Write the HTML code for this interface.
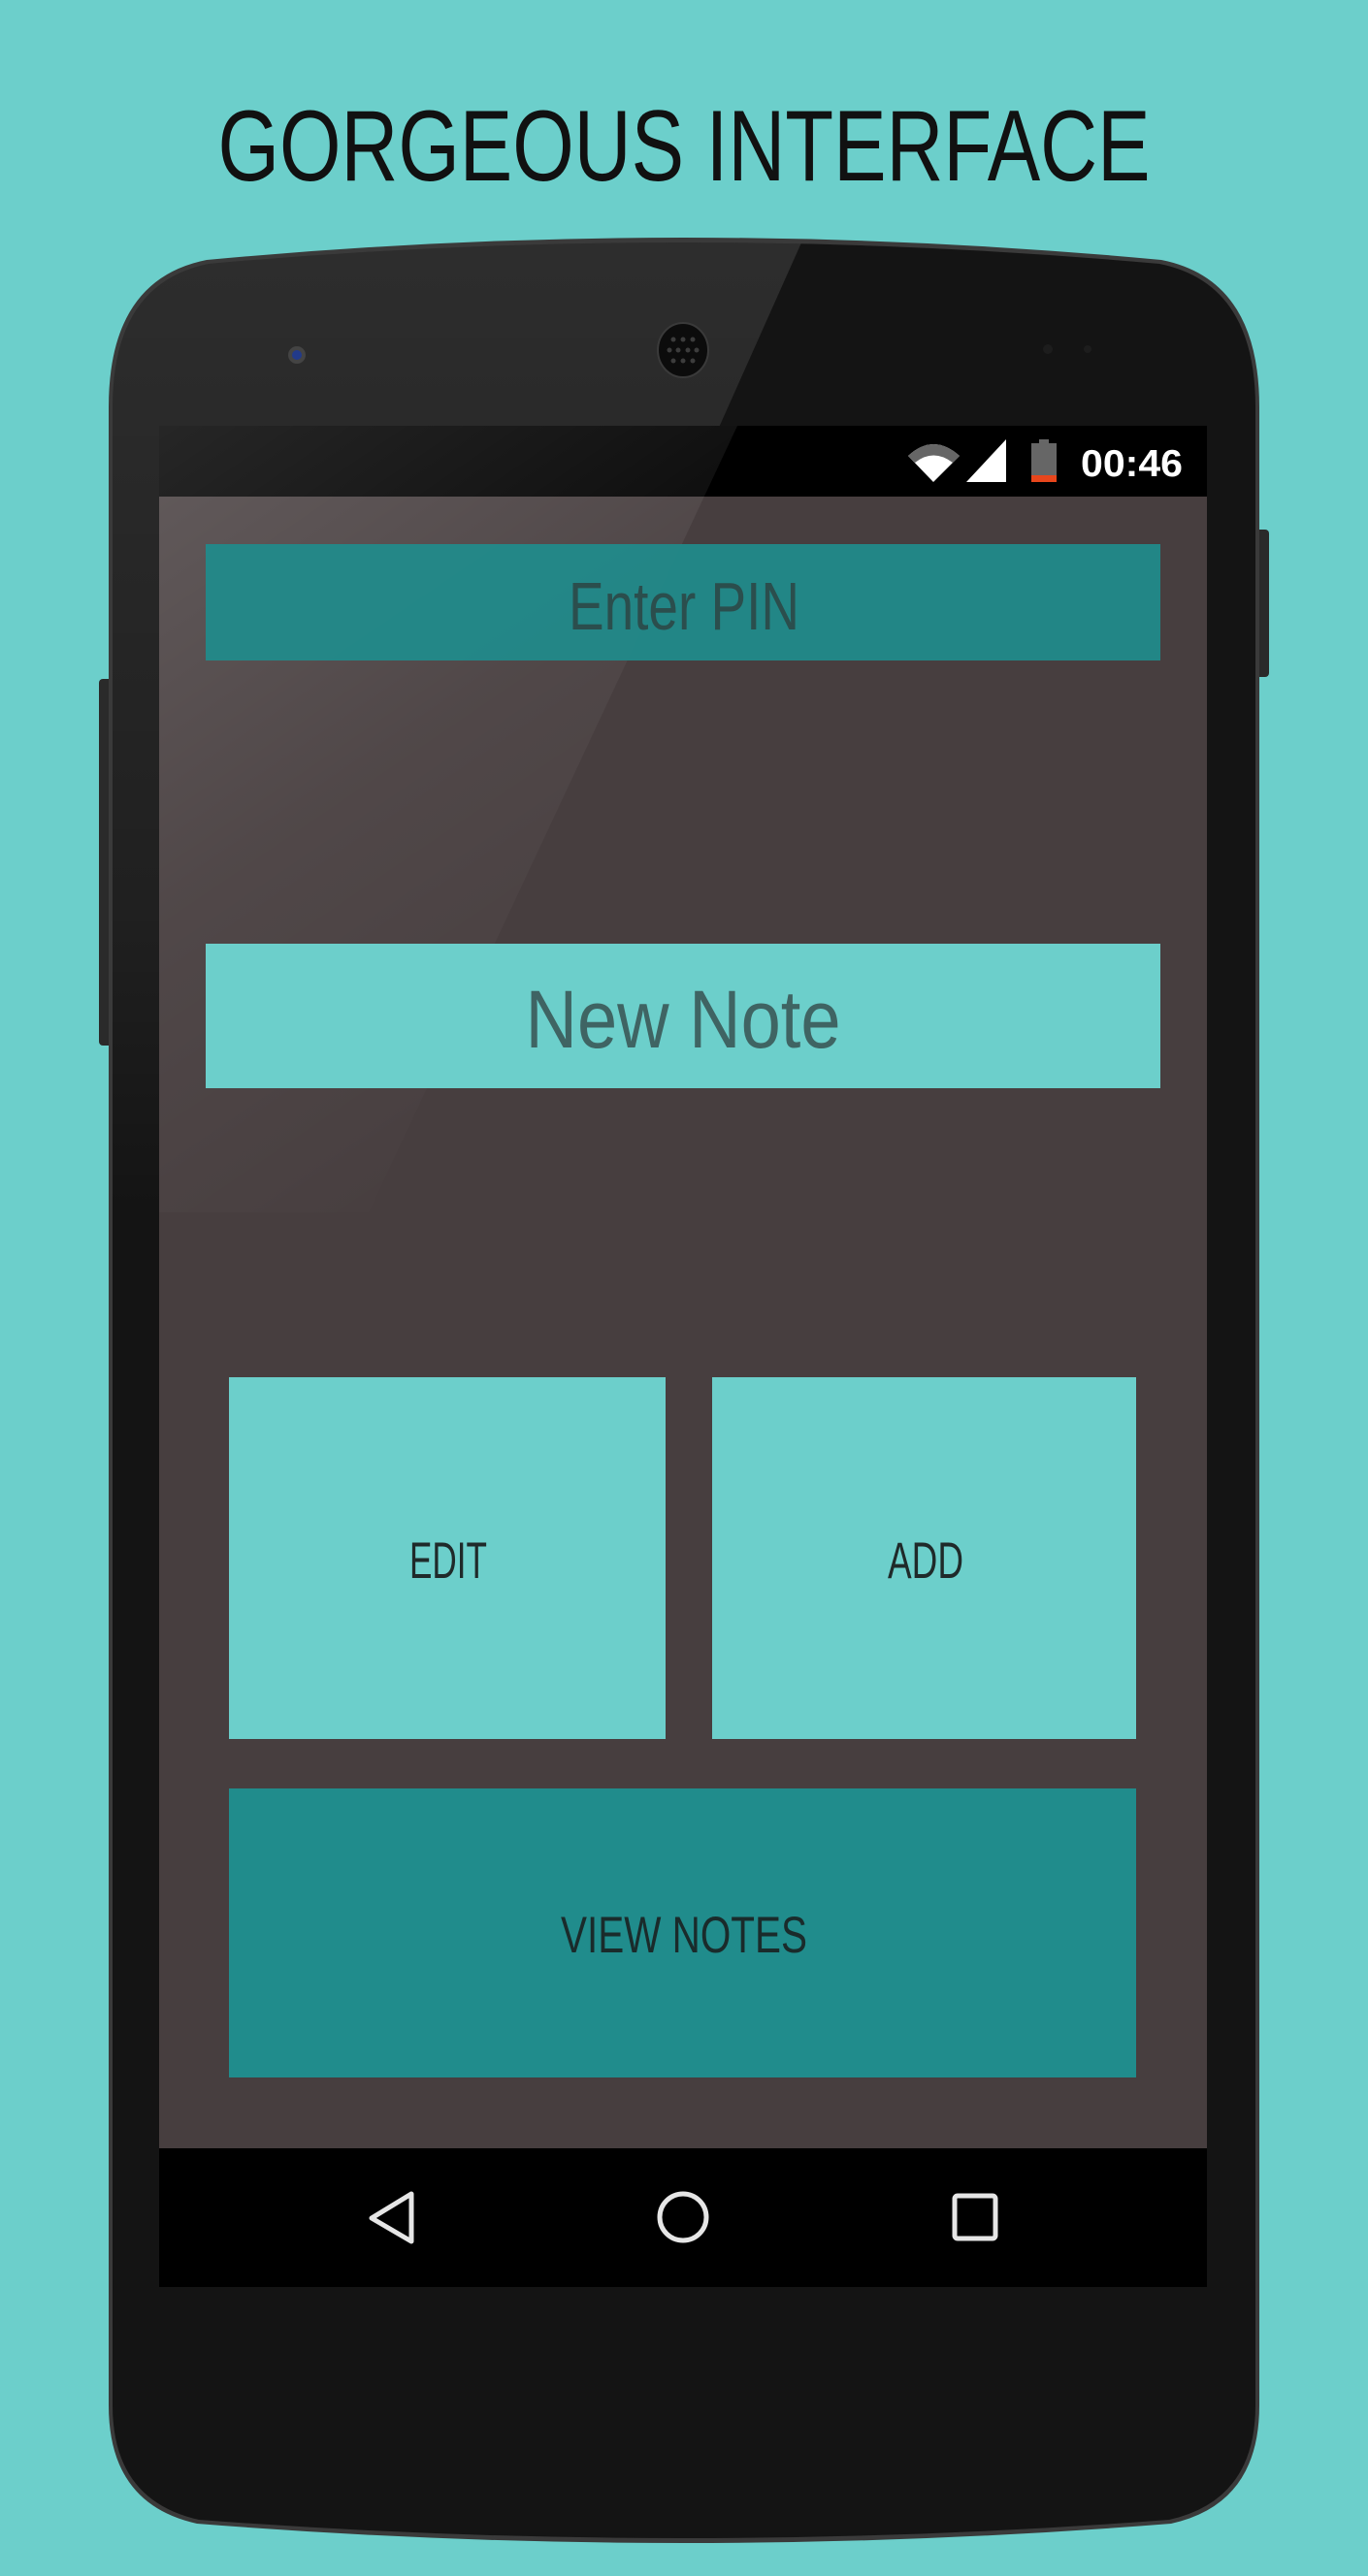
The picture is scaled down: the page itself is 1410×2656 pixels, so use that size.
<!DOCTYPE html>
<html><head><meta charset="utf-8"><style>
html,body{margin:0;padding:0;background:#6ccfcb;}
svg{display:block}
</style></head><body>
<svg width="1410" height="2656" viewBox="0 0 1410 2656" xmlns="http://www.w3.org/2000/svg">
<defs>
<linearGradient id="gl" x1="0" y1="0" x2="0.5" y2="1">
<stop offset="0" stop-color="#fff" stop-opacity="0.15"/>
<stop offset="0.5" stop-color="#fff" stop-opacity="0.05"/>
<stop offset="1" stop-color="#fff" stop-opacity="0"/>
</linearGradient>
<linearGradient id="bz" x1="0" y1="0" x2="0" y2="1">
<stop offset="0" stop-color="#fff" stop-opacity="0.11"/>
<stop offset="0.7" stop-color="#fff" stop-opacity="0.05"/>
<stop offset="1" stop-color="#fff" stop-opacity="0"/>
</linearGradient>
<clipPath id="ph"><path d="M116,420 Q116,292 215,272 Q705,228 1195,272 Q1294,292 1294,420 L1294,2480 Q1294,2578 1205,2598 Q705,2636 205,2598 Q116,2578 116,2480 Z"/></clipPath>
</defs>
<rect width="1410" height="2656" fill="#6ccfcb"/>
<text x="705" y="186" text-anchor="middle" font-family="Liberation Sans, sans-serif" font-size="104" fill="#111" textLength="961" lengthAdjust="spacingAndGlyphs">GORGEOUS INTERFACE</text>
<rect x="1292" y="546" width="16" height="152" rx="4" fill="#2a2a2a"/>
<rect x="102" y="700" width="16" height="378" rx="4" fill="#2a2a2a"/>
<path d="M112,420 Q112,288 213,268 Q705,222 1197,268 Q1298,288 1298,420 L1298,2480 Q1298,2582 1207,2602 Q705,2642 203,2602 Q112,2582 112,2480 Z" fill="#3a3a3a"/>
<path d="M116,420 Q116,292 215,272 Q705,228 1195,272 Q1294,292 1294,420 L1294,2480 Q1294,2578 1205,2598 Q705,2636 205,2598 Q116,2578 116,2480 Z" fill="#141414"/>
<g clip-path="url(#ph)">
<polygon points="100,230 835,230 380,1250 100,1250" fill="url(#bz)"/>
</g>
<circle cx="306" cy="366" r="9" fill="#444"/><circle cx="306" cy="366" r="5" fill="#223a8a"/>
<ellipse cx="704" cy="361" rx="26" ry="28" fill="#0c0c0c" stroke="#3a3a3a" stroke-width="2"/>
<g fill="#3c3c3c">
<circle cx="694" cy="350" r="2.5"/><circle cx="704" cy="350" r="2.5"/><circle cx="714" cy="350" r="2.5"/>
<circle cx="690" cy="361" r="2.5"/><circle cx="699" cy="361" r="2.5"/><circle cx="709" cy="361" r="2.5"/><circle cx="718" cy="361" r="2.5"/>
<circle cx="694" cy="372" r="2.5"/><circle cx="704" cy="372" r="2.5"/><circle cx="714" cy="372" r="2.5"/>
</g>
<circle cx="1080" cy="360" r="5" fill="#1d1d1d"/><circle cx="1121" cy="360" r="4" fill="#1d1d1d"/>
<rect x="164" y="439" width="1080" height="73" fill="#000"/>
<rect x="164" y="512" width="1080" height="1703" fill="#473e3f"/>
<rect x="164" y="2215" width="1080" height="143" fill="#000"/>
<polygon points="164,439 760,439 380,1250 164,1250" fill="url(#gl)"/>
<path d="M936,470 Q962,446 989,470 L962,497 Z" fill="#fff"/>
<path d="M936,470 Q962,446 989,470 L982,477 Q962,462 943,477 Z" fill="#666"/>
<polygon points="996,497 1037,453 1037,497" fill="#fff"/>
<rect x="1071" y="453" width="10" height="5" fill="#666"/>
<rect x="1063" y="457" width="26" height="40" fill="#666"/>
<rect x="1063" y="490" width="26" height="7" fill="#e8461c"/>
<text x="1114" y="491" font-family="Liberation Sans, sans-serif" font-size="39" font-weight="bold" fill="#fff" textLength="105" lengthAdjust="spacingAndGlyphs">00:46</text>
<rect x="212" y="561" width="984" height="120" fill="#208c8c" fill-opacity="0.92"/>
<text x="705" y="649" text-anchor="middle" font-family="Liberation Sans, sans-serif" font-size="70" fill="#2b4e4d" textLength="238" lengthAdjust="spacingAndGlyphs">Enter PIN</text>
<rect x="212" y="973" width="984" height="149" fill="#6ccfcb"/>
<text x="704" y="1080" text-anchor="middle" font-family="Liberation Sans, sans-serif" font-size="84" fill="#3f6463" textLength="325" lengthAdjust="spacingAndGlyphs">New Note</text>
<rect x="236" y="1420" width="450" height="373" fill="#6ccfcb"/>
<text x="462" y="1627" text-anchor="middle" font-family="Liberation Sans, sans-serif" font-size="53" fill="#1f2a2a" textLength="80" lengthAdjust="spacingAndGlyphs">EDIT</text>
<rect x="734" y="1420" width="437" height="373" fill="#6ccfcb"/>
<text x="954" y="1627" text-anchor="middle" font-family="Liberation Sans, sans-serif" font-size="53" fill="#1f2a2a" textLength="78" lengthAdjust="spacingAndGlyphs">ADD</text>
<rect x="236" y="1844" width="935" height="298" fill="#208c8c"/>
<text x="705" y="2013" text-anchor="middle" font-family="Liberation Sans, sans-serif" font-size="53" fill="#1a2b2b" textLength="254" lengthAdjust="spacingAndGlyphs">VIEW NOTES</text>
<path d="M424,2262 L424,2311 L383,2287 Z" fill="none" stroke="#e6e6e6" stroke-width="5" stroke-linejoin="round"/>
<circle cx="704" cy="2286" r="24" fill="none" stroke="#e6e6e6" stroke-width="5"/>
<rect x="984" y="2264" width="42" height="44" rx="3" fill="none" stroke="#e6e6e6" stroke-width="5"/>
</svg>
</body></html>
